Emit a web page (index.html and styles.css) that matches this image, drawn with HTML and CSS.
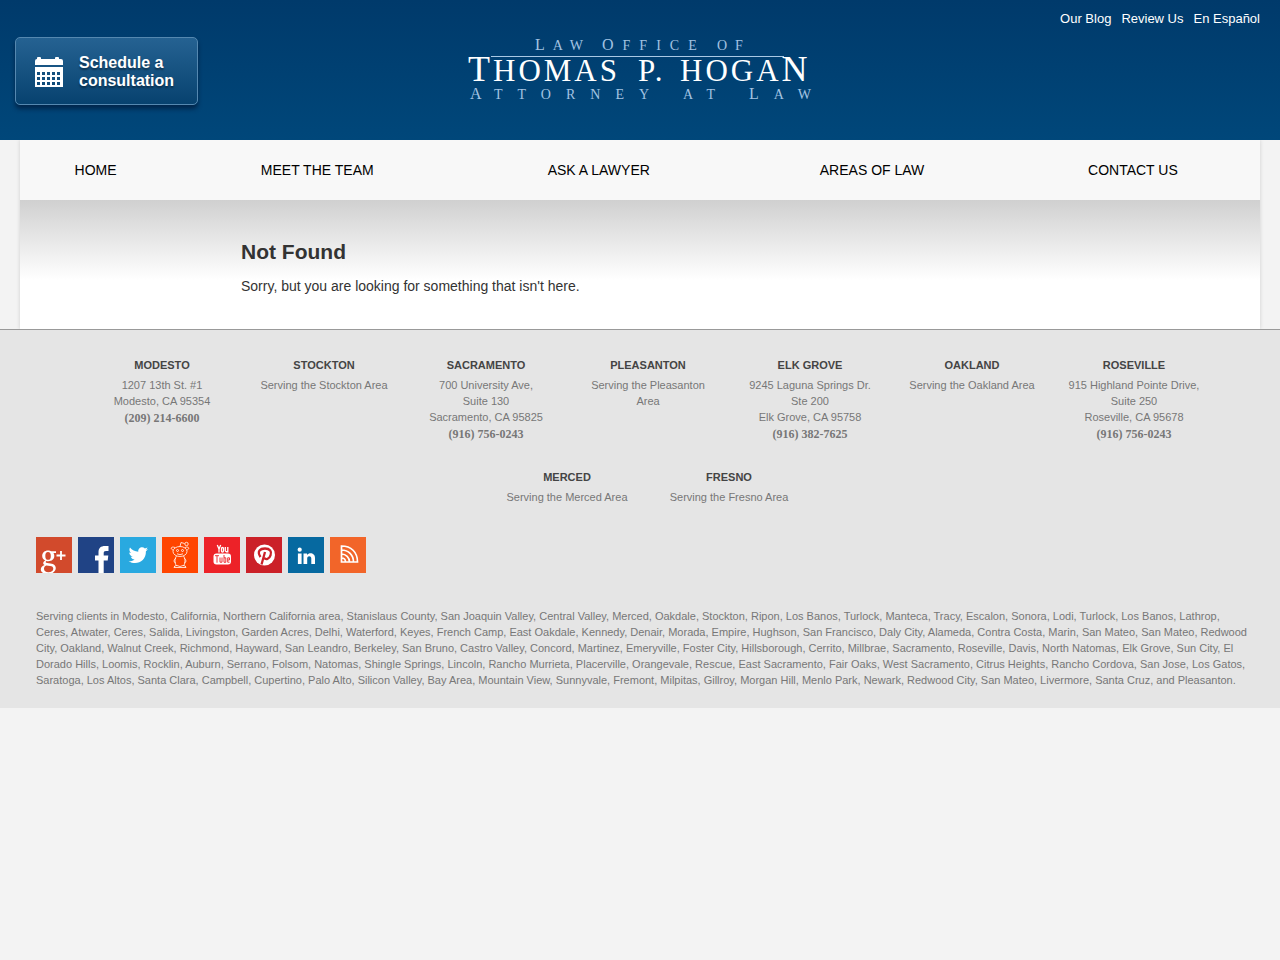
FILE: index.html
```html
<!DOCTYPE html>
<html lang="en">
<head>
  <meta charset="UTF-8">
  <meta name="viewport" content="width=device-width, initial-scale=1.0">
  <title>Page not found - Law Office of Thomas P. Hogan</title>
  <link rel="stylesheet" href="styles.css">
</head>
<body>
  <header class="header">
    <a class="consult" href="#">
      <svg width="28" height="30" viewBox="0 0 28 30" fill="#fff" aria-hidden="true">
        <path d="M0 4q0-2 2-2V1q0-1 1-1h2q1 0 1 1v1h14V1q0-1 1-1h2q1 0 1 1v1h2q2 0 2 2v4H0z"/>
        <path fill-rule="evenodd" d="M0 10h28v20H0zM2 15v3h3v-3zM7 15v3h3v-3zM12 15v3h3v-3zM17 15v3h3v-3zM22 15v3h3v-3zM2 20v3h3v-3zM7 20v3h3v-3zM12 20v3h3v-3zM17 20v3h3v-3zM22 20v3h3v-3zM2 25v3h3v-3zM7 25v3h3v-3zM12 25v3h3v-3zM17 25v3h3v-3zM22 25v3h3v-3z"/>
      </svg>
      <span>Schedule a<br>consultation</span>
    </a>
    <a class="logo" href="#">
      <svg width="348" height="68" viewBox="0 0 348 68">
        <g class="logo-small">
          <text y="15"><tspan class="cap" x="69">L</tspan>AW</text>
          <text y="15" class="mid"><tspan class="cap" x="136">O</tspan>FFICE</text>
          <text y="15" x="251">OF</text>
          <text y="64" class="cap" x="4">A</text>
          <text y="64" class="wide" x="28">TTORNEY</text>
          <text y="64" class="wide" x="217">AT</text>
          <text y="64" class="wide" x="283"><tspan class="cap">L</tspan>AW</text>
        </g>
        <g class="logo-name">
          <text y="46"><tspan class="cap" x="2">T</tspan>HOMAS</text>
          <text y="46" x="172">P.</text>
          <text y="46" x="214">HOGA<tspan class="cap">N</tspan></text>
        </g>
        <path d="M25 21.500h293" stroke="#a9c8e4"/>
      </svg>
    </a>
    <div class="top-links">
      <a href="#">Our Blog</a>
      <a href="#">Review Us</a>
      <a href="#">En Español</a>
    </div>
  </header>

  <div class="page">
    <nav>
      <ul class="menu">
        <li><a href="#">HOME</a></li>
        <li><a href="#">MEET THE TEAM</a></li>
        <li><a href="#">ASK A LAWYER</a></li>
        <li><a href="#">AREAS OF LAW</a></li>
        <li><a href="#">CONTACT US</a></li>
      </ul>
    </nav>
    <main class="content">
      <div class="article">
        <h1>Not Found</h1>
        <p>Sorry, but you are looking for something that isn't here.</p>
      </div>
    </main>
  </div>

  <footer class="footer">
    <div class="offices">
      <div class="office">
        <h2>MODESTO</h2>
        <p>1207 13th St. #1<br>Modesto, CA 95354</p>
        <a class="phone" href="tel:2092146600">(209) 214-6600</a>
      </div>
      <div class="office">
        <h2>STOCKTON</h2>
        <p>Serving the Stockton Area</p>
      </div>
      <div class="office">
        <h2>SACRAMENTO</h2>
        <p>700 University Ave,<br>Suite 130<br>Sacramento, CA 95825</p>
        <a class="phone" href="tel:9167560243">(916) 756-0243</a>
      </div>
      <div class="office">
        <h2>PLEASANTON</h2>
        <p>Serving the Pleasanton Area</p>
      </div>
      <div class="office">
        <h2>ELK GROVE</h2>
        <p>9245 Laguna Springs Dr.<br>Ste 200<br>Elk Grove, CA 95758</p>
        <a class="phone" href="tel:9163827625">(916) 382-7625</a>
      </div>
      <div class="office">
        <h2>OAKLAND</h2>
        <p>Serving the Oakland Area</p>
      </div>
      <div class="office">
        <h2>ROSEVILLE</h2>
        <p>915 Highland Pointe Drive,<br>Suite 250<br>Roseville, CA 95678</p>
        <a class="phone" href="tel:9167560243">(916) 756-0243</a>
      </div>
      <div class="office">
        <h2>MERCED</h2>
        <p>Serving the Merced Area</p>
      </div>
      <div class="office">
        <h2>FRESNO</h2>
        <p>Serving the Fresno Area</p>
      </div>
    </div>

    <div class="social">
      <a class="google" href="#" aria-label="Google Plus">
        <svg viewBox="0 0 36 36">
          <path fill="#fff" fill-rule="evenodd" d="M12 13.500c1.500 0 2.500.3 3.300.7H20v1.900h-2.500c.6.900.8 1.800.8 2.900 0 3.200-2.600 5.200-6 5.200-.8 0-1.500-.1-2-.2-1 .8-.8 1.800.8 2l3.400.4c3.600.4 5.300 2 5.300 4.700 0 3.400-3.300 5.900-8 5.900-4.200 0-7-1.700-7-4.500 0-2.200 1.400-3.700 3.900-4.400-2.200-1-2-3.300.7-4.700-2-.8-3.200-2.400-3.200-4.500 0-3.200 2.500-5.400 5.800-5.400zM12 15c-1.800 0-2.700 1.400-2.700 3.900s1 3.900 2.800 3.900 2.700-1.400 2.700-3.900S13.900 15 12 15zM10.300 28.500c-1.500.7-2.300 1.800-2.300 3.300 0 2.100 1.700 3.400 4.400 3.400 2.900 0 4.900-1.200 4.900-3.400 0-1.700-1-2.500-3.200-2.800z"/>
          <path d="M20.500 18.500h9M25 14v9" fill="none" stroke="#fff" stroke-width="1.800"/>
        </svg>
      </a>
      <a class="facebook" href="#" aria-label="Facebook">
        <svg viewBox="0 0 36 36" fill="#fff"><path d="M20.500 36V23.500h-3.500v-5h3.500v-3c0-4.500 2.300-6.500 6.500-6.500h3.500v5H28c-1.800 0-2.300.7-2.300 2.300v2.200h4.600l-.6 5h-4V36z"/></svg>
      </a>
      <a class="twitter" href="#" aria-label="Twitter">
        <svg viewBox="0 0 36 36" fill="#fff"><path d="M28 12c-.8.4-1.500.5-2.200.6.8-.5 1.400-1.200 1.700-2.100-.8.500-1.700.8-2.600 1-2.700-2.700-7.200-.5-6.600 3.300-3.400-.2-6.300-1.700-8.300-4.200-1.200 2.100-.5 4.200 1.200 5.500-.7 0-1.300-.2-1.900-.5 0 2 1.400 3.600 3.300 4-.6.200-1.200.2-1.800.1.500 1.600 2 2.800 3.800 2.800-1.700 1.400-3.700 1.900-6 1.700 7.400 4.500 17.600.8 17.300-9.900.8-.6 1.500-1.400 2.100-2.300z"/></svg>
      </a>
      <a class="reddit" href="#" aria-label="Reddit">
        <svg viewBox="0 0 36 36" fill="none" stroke="#fff" stroke-width=".8">
          <ellipse cx="18" cy="14.500" rx="7" ry="5"/>
          <path d="M18 9.500l1-4 3.500 1"/>
          <circle cx="24.500" cy="7" r="1.700"/>
          <circle cx="15.500" cy="13.500" r="1"/><circle cx="20.500" cy="13.500" r="1"/>
          <path d="M15 16.800q3 1.800 6 0M11 13c-3-1-2-4 2-2.500M25 13c3-1 2-4-2-2.500M14.500 19c-2 3-2 7 0 10M21.500 19c2 3 2 7 0 10M14 21c-3 2-2 5 0 5M22 21c3 2 2 5 0 5M12 30.500q0-2 3-2l3 1 3-1q3 0 3 2z"/>
        </svg>
      </a>
      <a class="youtube" href="#" aria-label="YouTube">
        <svg viewBox="0 0 36 36" fill="none" stroke="#fff" stroke-width="1.300">
          <path d="M13.300 8l1.700 4 1.700-4M15 12v3.500M21.300 10v4q1 1.500 2.500 0M23.800 10v5.500"/>
          <rect x="17.500" y="10.500" width="2" height="4.500" rx="1"/>
          <rect x="9.500" y="16.500" width="17.500" height="11" rx="3" fill="#fff" stroke="none"/>
          <path d="M11 18.700h4M13 18.700v7M16 20.500v4.700h2v-4.700M20 18v7.300h1.800v-4.500H20M25.500 25.200h-1.800v-4.400h1.800v2.200h-1.800" stroke="#ed2228" stroke-width=".9"/>
        </svg>
      </a>
      <a class="pinterest" href="#" aria-label="Pinterest">
        <svg viewBox="0 0 36 36"><circle cx="18.500" cy="18" r="10.500" fill="#fff"/><path d="M14.500 20c-4-6 0-8.500 4.500-8.500 5 0 7 3 5.600 6.700-1.200 4-5 5-6.300 2.500M19 15l-3.500 12.500" fill="none" stroke="#cb2028" stroke-width="2.300"/></svg>
      </a>
      <a class="linkedin" href="#" aria-label="LinkedIn">
        <svg viewBox="0 0 36 36" fill="#fff"><circle cx="11.700" cy="12.700" r="2.100"/><path d="M9.900 16.500h3.700V27H9.900zM15.500 16.500H19V18c2-2.800 8-2.500 8 3v6h-3.700v-5.500c0-3-4.100-3-4.100 0V27h-3.700z"/></svg>
      </a>
      <a class="rss" href="#" aria-label="RSS">
        <svg viewBox="0 0 36 36" fill="none" stroke="#fff" stroke-width="1.700"><path d="M11.500 9C21 9 27.500 15 27.500 25h-16zM11.500 13c7 0 12 5 12 12M11.500 17c4.500 0 8 3.500 8 8M11.500 21q4 0 4 4"/></svg>
      </a>
    </div>

    <p class="areas">Serving clients in Modesto, California, Northern California area, Stanislaus County, San Joaquin Valley, Central Valley, Merced, Oakdale, Stockton, Ripon, Los Banos, Turlock, Manteca, Tracy, Escalon, Sonora, Lodi, Turlock, Los Banos, Lathrop, Ceres, Atwater, Ceres, Salida, Livingston, Garden Acres, Delhi, Waterford, Keyes, French Camp, East Oakdale, Kennedy, Denair, Morada, Empire, Hughson, San Francisco, Daly City, Alameda, Contra Costa, Marin, San Mateo, San Mateo, Redwood City, Oakland, Walnut Creek, Richmond, Hayward, San Leandro, Berkeley, San Bruno, Castro Valley, Concord, Martinez, Emeryville, Foster City, Hillsborough, Cerrito, Millbrae, Sacramento, Roseville, Davis, North Natomas, Elk Grove, Sun City, El Dorado Hills, Loomis, Rocklin, Auburn, Serrano, Folsom, Natomas, Shingle Springs, Lincoln, Rancho Murrieta, Placerville, Orangevale, Rescue, East Sacramento, Fair Oaks, West Sacramento, Citrus Heights, Rancho Cordova, San Jose, Los Gatos, Saratoga, Los Altos, Santa Clara, Campbell, Cupertino, Palo Alto, Silicon Valley, Bay Area, Mountain View, Sunnyvale, Fremont, Milpitas, Gillroy, Morgan Hill, Menlo Park, Newark, Redwood City, San Mateo, Livermore, Santa Cruz, and Pleasanton.</p>
  </footer>
</body>
</html>
```
FILE: styles.css
```css
* {
  box-sizing: border-box;
}
body {
  margin: 0;
  background: #f3f3f3;
  color: #333;
  font-family: "Liberation Sans", Arial, sans-serif;
  font-size: 14px;
}
a {
  color: inherit;
  text-decoration: none;
}
h1, h2, p, ul {
  margin: 0;
  padding: 0;
}

/* header */
.header {
  position: relative;
  display: grid;
  grid-template-columns: 1fr auto 1fr;
  align-items: start;
  min-height: 140px;
  padding: 0 15px;
  background: linear-gradient(#003a6b, #00477a);
  color: #fff;
}
.consult {
  display: flex;
  align-items: center;
  justify-self: start;
  gap: 16px;
  width: 183px;
  height: 68px;
  margin-top: 37px;
  padding: 2px 0 0 19px;
  border: 1px solid #5588b0;
  border-radius: 5px;
  background: linear-gradient(#256292, #07426f);
  box-shadow: 0 4px 4px rgba(0, 20, 50, 0.6);
  font-size: 16px;
  font-weight: bold;
  line-height: 18px;
  text-shadow: 0 2px 2px rgba(0, 0, 0, 0.4);
}
.logo {
  margin-top: 35px;
}
.logo svg {
  display: block;
  overflow: visible;
}
.logo text {
  font-family: "Liberation Serif", "Times New Roman", serif;
}
.logo-small {
  fill: #a3c3e2;
  font-size: 14px;
  letter-spacing: 8px;
}
.logo-small .cap {
  font-size: 16px;
}
.logo-small .mid {
  letter-spacing: 9px;
}
.logo-small .wide {
  letter-spacing: 15px;
}
.logo-name {
  fill: #fff;
  font-size: 31px;
  letter-spacing: 3px;
}
.logo-name .cap {
  font-size: 36px;
}
.top-links {
  display: flex;
  justify-content: flex-end;
  gap: 10px;
  padding: 11px 5px 0 0;
  font-size: 13px;
  line-height: 16px;
}

/* page */
.page {
  margin: 0 20px;
  background: #fff;
  box-shadow: 0 0 4px rgba(0, 0, 0, 0.15);
}
.menu {
  display: table;
  width: 100%;
  padding-right: 4px;
  background: #f8f8f8;
  color: #000;
  list-style: none;
}
.menu li {
  display: table-cell;
  height: 60px;
  padding: 0 17px;
  text-align: center;
  vertical-align: middle;
}
.content {
  padding: 40px 20px 33px;
  background: linear-gradient(#d0d0d0, #fff 80px);
}
.article {
  max-width: 798px;
  margin: 0 auto;
}
.article h1 {
  margin-bottom: 12px;
  font-size: 21px;
  line-height: 24px;
}
.article p {
  line-height: 20px;
}

/* footer */
.footer {
  position: relative;
  padding: 24px 30px 20px 36px;
  border-top: 1px solid #999;
  background: #e5e5e5;
  color: #777;
  font-size: 11px;
  line-height: 16px;
}
.offices {
  display: flex;
  flex-wrap: wrap;
  justify-content: center;
  gap: 24px 30px;
  margin-right: -10px;
}
.office {
  width: 132px;
  text-align: center;
}
.office h2 {
  margin-bottom: 1px;
  color: #444;
  font-size: 11px;
  line-height: 22px;
}
.phone {
  display: block;
  margin-top: 1px;
  font-family: "Liberation Serif", "Times New Roman", serif;
  font-size: 12px;
  font-weight: bold;
}
.social {
  display: flex;
  gap: 6px;
  margin: 32px 0 35px;
}
.social a, .social svg {
  display: block;
  width: 36px;
  height: 36px;
}
.google { background: #d24a2c; }
.facebook { background: #204385; }
.twitter { background: #29a9e0; }
.reddit { background: #ff4500; }
.youtube { background: #ed2228; }
.pinterest { background: #cb2028; }
.linkedin { background: #0669a0; }
.rss { background: #f26529; }
```
